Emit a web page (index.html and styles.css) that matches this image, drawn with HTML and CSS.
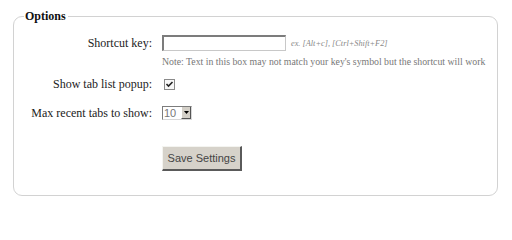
FILE: index.html
```html
<!DOCTYPE html>
<html>
<head>
<meta charset="utf-8">
<link rel="stylesheet" href="styles.css">
</head>
<body>
<div class="page">
  <fieldset class="options">
    <legend class="options-title">Options</legend>
    <div class="form">
      <label class="label row1">Shortcut key:</label>
      <div class="control row1">
        <span class="textbox"></span>
        <span class="example">ex. [Alt+c], [Ctrl+Shift+F2]</span>
      </div>
      <div class="note">Note: Text in this box may not match your key's symbol but the shortcut will work</div>

      <label class="label row2">Show tab list popup:</label>
      <div class="control row2">
        <span class="checkbox">
          <svg width="9" height="9" viewBox="0 0 9 9"><path d="M1.5 4 L3.5 6 L7.5 2" fill="none" stroke="#222" stroke-width="1.6"/></svg>
        </span>
      </div>

      <label class="label row3">Max recent tabs to show:</label>
      <div class="control row3">
        <span class="select"><span class="select-value">10</span><span class="select-arrow"><svg width="5" height="3" viewBox="0 0 5 3"><path d="M0 0 H5 L2.5 3 Z" fill="#000"/></svg></span></span>
      </div>

      <div class="actions">
        <button class="save">Save Settings</button>
      </div>
    </div>
  </fieldset>
</div>
</body>
</html>
```

FILE: styles.css
```css
html, body {
  margin: 0;
  padding: 0;
  background: #fff;
}
body {
  font-family: "Liberation Serif", "Times New Roman", serif;
  color: #222;
}
.page {
  padding: 8px 14px 0 13px;
}
.options {
  margin: 0;
  padding: 0 0 24px 0;
  border: 1px solid #d2d2d2;
  border-radius: 9px;
}
.options-title {
  font-family: "Liberation Serif", "Times New Roman", serif;
  font-weight: bold;
  font-size: 12px;
  line-height: 16px;
  padding: 0 2px 0 1px;
  margin-left: 10px;
  color: #111;
}
.form {
  display: grid;
  grid-template-columns: 138px auto;
  column-gap: 10px;
  margin-top: 11px;
}
.label {
  grid-column: 1;
  text-align: right;
  font-family: "Liberation Serif", "Times New Roman", serif;
  font-size: 12px;
  line-height: 16px;
  color: #222;
}
.control {
  grid-column: 2;
  display: flex;
  align-items: center;
  height: 16px;
}
.textbox {
  display: block;
  width: 121px;
  height: 13px;
  border-top: 2px solid #7c7c7c;
  border-left: 2px solid #7c7c7c;
  border-right: 1px solid #c8c8c8;
  border-bottom: 1px solid #c8c8c8;
  background: #fff;
}
.example {
  font-style: italic;
  font-size: 8.3px;
  color: #888;
  margin-left: 5px;
}
.note {
  grid-column: 2;
  font-size: 9.8px;
  line-height: 12px;
  color: #777;
  margin-top: 5px;
  white-space: nowrap;
}
.row2.label, .control.row2 {
  margin-top: 8px;
}
.checkbox {
  display: flex;
  align-items: center;
  justify-content: center;
  width: 9px;
  height: 9px;
  margin-left: 2px;
  border: 1px solid #8a8a8a;
  background: #f8f8f8;
}
.row3.label, .control.row3 {
  margin-top: 13px;
}
.select {
  display: flex;
  align-items: stretch;
  height: 12px;
  border-top: 1px solid #7c7c7c;
  border-left: 1px solid #7c7c7c;
  border-right: 1px solid #d8d8d8;
  border-bottom: 1px solid #d8d8d8;
  background: #fff;
  font-family: "Liberation Sans", Arial, sans-serif;
}
.select-value {
  font-size: 11px;
  line-height: 12px;
  color: #777;
  padding: 0 2px 0 1px;
  width: 15px;
}
.select-arrow {
  width: 10px;
  background: #d4d0c8;
  border-left: 1px solid #fff;
  border-right: 1px solid #555;
  border-bottom: 1px solid #555;
  box-sizing: border-box;
  display: flex;
  align-items: center;
  justify-content: center;
}
.actions {
  grid-column: 2;
  margin-top: 25px;
}
.save {
  display: block;
  width: 80px;
  height: 25px;
  padding: 0;
  background: #d6d2ca;
  border-top: 1px solid #f4f4f0;
  border-left: 1px solid #f4f4f0;
  border-right: 2px solid #5a5a5a;
  border-bottom: 2px solid #5a5a5a;
  font-family: "Liberation Sans", Arial, sans-serif;
  font-size: 11px;
  color: #444;
}
```
